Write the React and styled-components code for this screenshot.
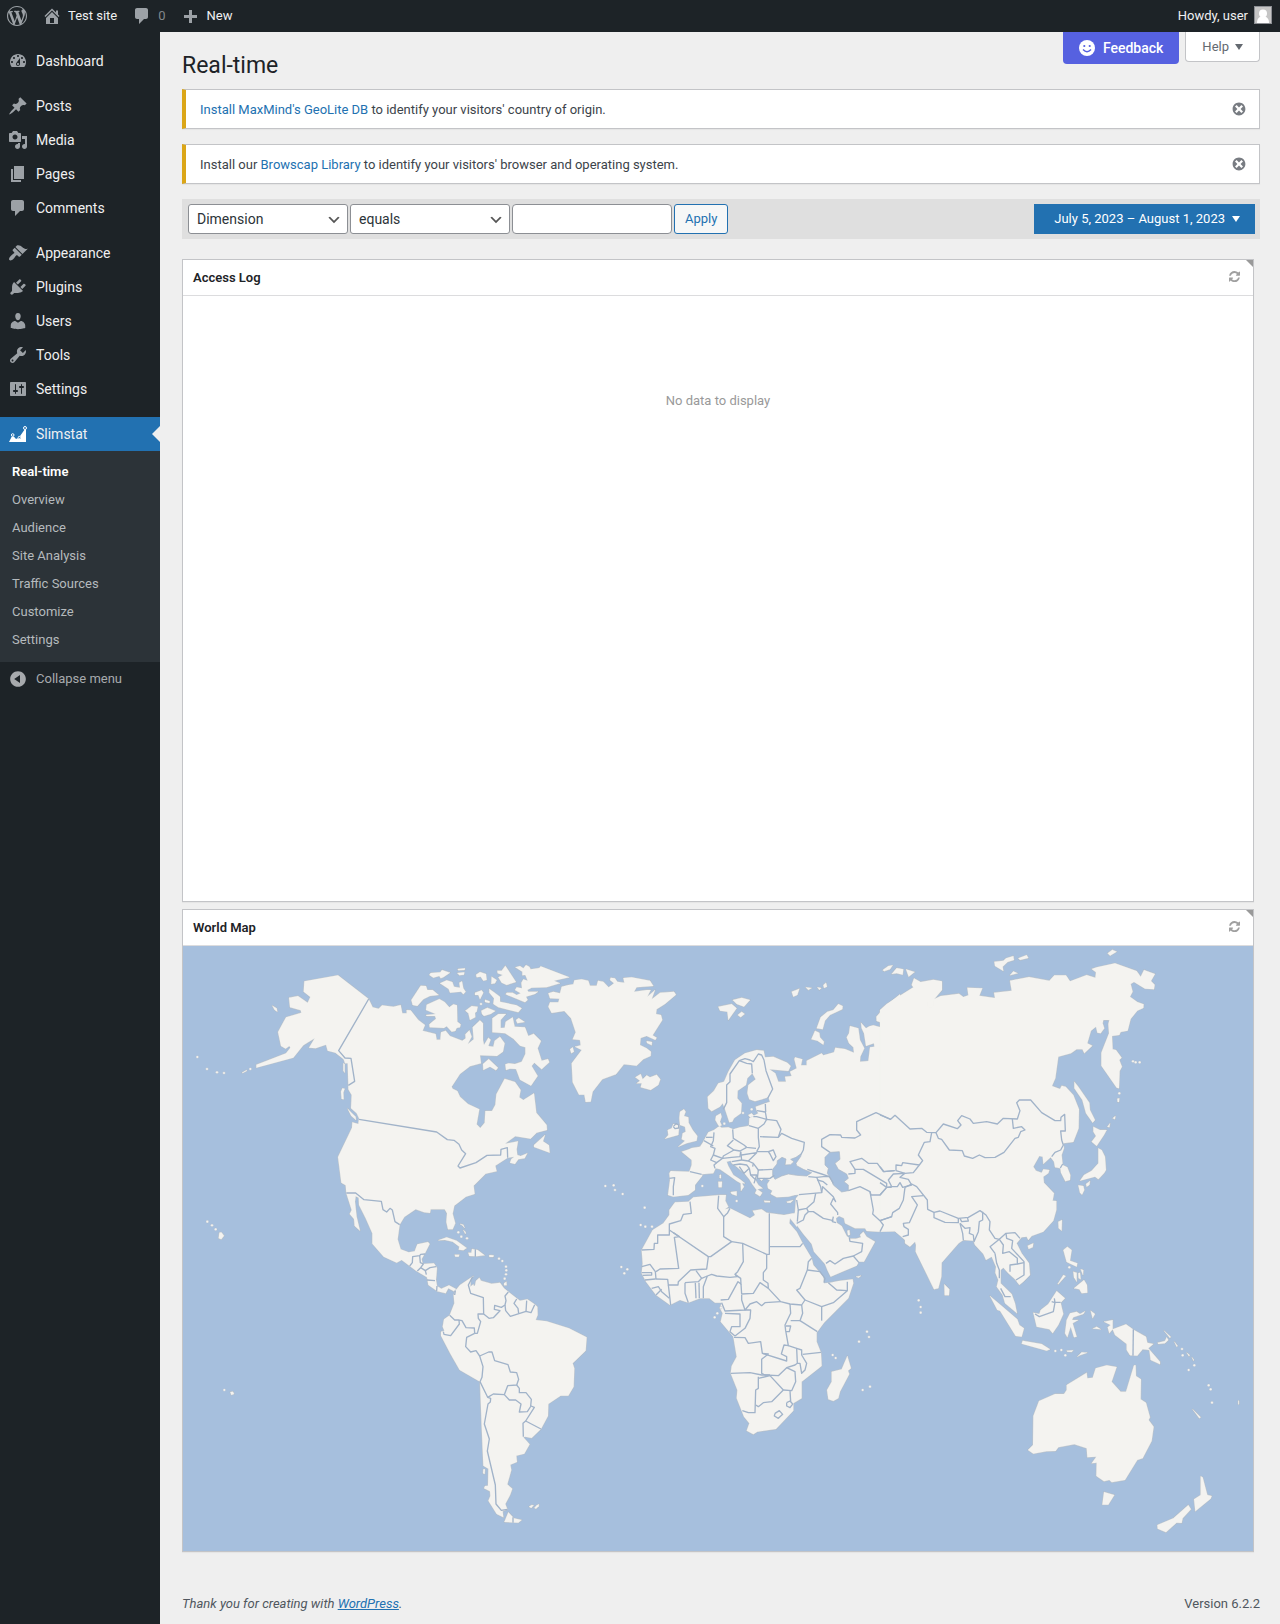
import styled, { createGlobalStyle, css } from "styled-components";

const icons = {
  wordpress:
    "M20 10c0-5.51-4.49-10-10-10C4.48 0 0 4.49 0 10c0 5.52 4.48 10 10 10 5.51 0 10-4.48 10-10zM7.78 15.37L4.37 6.22c.55-.02 1.17-.08 1.17-.08.5-.06.44-1.13-.06-1.11 0 0-1.45.11-2.37.11-.18 0-.37 0-.58-.01C4.12 2.69 6.87 1.11 10 1.11c2.33 0 4.45.87 6.05 2.34-.68-.11-1.65.39-1.65 1.58 0 .74.45 1.36.9 2.1.35.61.55 1.36.55 2.46 0 1.49-1.4 5-1.4 5l-3.03-8.37c.54-.02.82-.17.82-.17.5-.05.44-1.25-.06-1.22 0 0-1.44.12-2.38.12-.87 0-2.33-.12-2.33-.12-.5-.03-.56 1.2-.06 1.22l.92.08 1.26 3.41zM17.41 10c.24-.64.74-1.87.43-4.25.7 1.29 1.05 2.71 1.05 4.25 0 3.29-1.73 6.24-4.4 7.78.97-2.59 1.94-5.2 2.92-7.78zM6.1 18.09C3.12 16.65 1.11 13.53 1.11 10c0-1.3.23-2.48.72-3.59C3.25 10.3 4.67 14.2 6.1 18.09zm4.03-6.63l2.58 6.98c-.86.29-1.76.45-2.71.45-.79 0-1.57-.11-2.29-.33.81-2.38 1.62-4.74 2.42-7.1z",
  home: "M16 8.5l1.53 1.53-1.06 1.06L10 4.6l-6.47 6.49-1.06-1.06L10 2.5l4 4v-2h2v4zm-6-2.46l6 5.99V18H4v-5.97zM12 17v-5H8v5h4z",
  comments:
    "M5 2h9c1.1 0 2 .9 2 2v7c0 1.1-.9 2-2 2h-2l-5 5v-5H5c-1.1 0-2-.9-2-2V4c0-1.1.9-2 2-2z",
  plus: "M16 9v3h-5v5H8v-5H3V9h5V4h3v5h5z",
  dashboard:
    "M3.76 16h12.48c1.1-1.37 1.76-3.11 1.76-5 0-4.42-3.58-8-8-8s-8 3.58-8 8c0 1.89.66 3.63 1.76 5zM10 4c.55 0 1 .45 1 1s-.45 1-1 1-1-.45-1-1 .45-1 1-1zM6 6c.55 0 1 .45 1 1s-.45 1-1 1-1-.45-1-1 .45-1 1-1zm8 0c.55 0 1 .45 1 1s-.45 1-1 1-1-.45-1-1 .45-1 1-1zm-5.37 5.55L12 7v6c0 1.1-.9 2-2 2s-2-.9-2-2c0-.57.24-1.08.63-1.45zM4 10c.55 0 1 .45 1 1s-.45 1-1 1-1-.45-1-1 .45-1 1-1zm12 0c.55 0 1 .45 1 1s-.45 1-1 1-1-.45-1-1 .45-1 1-1zm-5 3c0-.55-.45-1-1-1s-1 .45-1 1 .45 1 1 1 1-.45 1-1z",
  posts:
    "M10.44 3.02l1.82-1.82 6.36 6.35-1.83 1.82c-1.05-.68-2.48-.57-3.41.36l-.75.75c-.92.93-1.04 2.35-.35 3.41l-1.83 1.82-2.41-2.41-2.8 2.79c-.42.42-3.38 2.71-3.8 2.29s1.86-3.39 2.28-3.81l2.79-2.79L4.1 9.36l1.83-1.82c1.05.69 2.48.57 3.4-.36l.75-.75c.93-.92 1.05-2.35.36-3.41z",
  media:
    "M13 11V4c0-.55-.45-1-1-1h-1.67L9 1H5L3.67 3H2c-.55 0-1 .45-1 1v7c0 .55.45 1 1 1h10c.55 0 1-.45 1-1zM7 4.5c1.38 0 2.5 1.12 2.5 2.5S8.38 9.5 7 9.5 4.5 8.38 4.5 7 5.62 4.5 7 4.5zM14 6h5v10.5c0 1.38-1.12 2.5-2.5 2.5S14 17.88 14 16.5s1.12-2.5 2.5-2.5c.17 0 .34.02.5.05V9h-3V6zm-4 8.05V13h2v3.5c0 1.38-1.12 2.5-2.5 2.5S7 17.88 7 16.5 8.12 14 9.5 14c.17 0 .34.02.5.05z",
  pages: "M6 15V2h10v13H6zm-1 1h8v2H3V5h2v11z",
  appearance:
    "M14.48 11.06L7.41 3.99l1.5-1.5c.5-.56 2.3-.47 3.51.32 1.21.8 1.43 1.28 2.91 2.1 1.18.64 2.45 1.26 4.45.85zm-.71.71L6.7 4.7 4.93 6.47c-.39.39-.39 1.02 0 1.41l1.06 1.06c.39.39.39 1.03 0 1.42-.6.6-1.43 1.11-2.21 1.69-.35.26-.7.53-1.01.84C1.43 14.23.4 16.08 1.4 17.07c.99 1 2.84-.03 4.18-1.36.31-.31.58-.66.85-1.02.57-.78 1.08-1.61 1.69-2.21.39-.39 1.02-.39 1.41 0l1.06 1.06c.39.39 1.02.39 1.41 0z",
  plugins:
    "M13.11 4.36L9.87 7.6 8 5.73l3.24-3.24c.35-.34 1.05-.2 1.56.32.52.51.66 1.21.31 1.55zm-8 1.77l.91-1.12 9.01 9.01-1.19.84c-.71.71-2.63 1.16-3.82 1.16H6.14L4.9 17.26c-.59.59-1.54.59-2.12 0-.59-.58-.59-1.53 0-2.12l1.24-1.24v-3.88c0-1.13.4-3.19 1.09-3.89zm7.26 3.97l3.24-3.24c.34-.35 1.04-.21 1.55.31.52.51.66 1.21.31 1.55l-3.24 3.25z",
  users:
    "M10 9.25c-2.27 0-2.73-3.44-2.73-3.44C7 4.02 7.82 2 9.97 2c2.16 0 2.98 2.02 2.71 3.81 0 0-.41 3.44-2.68 3.44zm0 2.57L12.72 10c2.39 0 4.52 2.33 4.52 4.53v2.49s-3.65 1.13-7.24 1.13c-3.65 0-7.24-1.13-7.24-1.13v-2.49c0-2.25 1.94-4.48 4.47-4.48z",
  tools:
    "M16.68 9.77c-1.34 1.34-3.3 1.67-4.95.99l-5.41 6.52c-.99.99-2.59.99-3.58 0s-.99-2.59 0-3.57l6.52-5.42c-.68-1.65-.35-3.61.99-4.95 1.28-1.28 3.12-1.62 4.72-1.06l-2.89 2.89 2.82 2.82 2.86-2.87c.53 1.58.18 3.39-1.08 4.65zM3.81 16.21c.4.39 1.04.39 1.43 0 .4-.4.4-1.04 0-1.43-.39-.4-1.03-.4-1.43 0-.39.39-.39 1.03 0 1.43z",
  settings:
    "M18 16V4c0-.55-.45-1-1-1H3c-.55 0-1 .45-1 1v12c0 .55.45 1 1 1h14c.55 0 1-.45 1-1zM8 11h1c.55 0 1 .45 1 1s-.45 1-1 1H8v1.5c0 .28-.22.5-.5.5s-.5-.22-.5-.5V13H6c-.55 0-1-.45-1-1s.45-1 1-1h1V5.5c0-.28.22-.5.5-.5s.5.22.5.5V11zm5-2h-1c-.55 0-1-.45-1-1s.45-1 1-1h1V5.5c0-.28.22-.5.5-.5s.5.22.5.5V7h1c.55 0 1 .45 1 1s-.45 1-1 1h-1v5.5c0 .28-.22.5-.5.5s-.5-.22-.5-.5V9z",
  collapse:
    "M10 2.16c4.33 0 7.84 3.51 7.84 7.84s-3.51 7.84-7.84 7.84S2.16 14.33 2.16 10 5.71 2.16 10 2.16zm2 11.72V6.12L6.18 9.97z",
  dismiss:
    "M10 2c4.42 0 8 3.58 8 8s-3.58 8-8 8-8-3.58-8-8 3.58-8 8-8zm5 11l-3-3 3-3-2-2-3 3-3-3-2 2 3 3-3 3 2 2 3-3 3 3z",
};

const menuGroups = [
  [{ label: "Dashboard", icon: "dashboard" }],
  [
    { label: "Posts", icon: "posts" },
    { label: "Media", icon: "media" },
    { label: "Pages", icon: "pages" },
    { label: "Comments", icon: "comments" },
  ],
  [
    { label: "Appearance", icon: "appearance" },
    { label: "Plugins", icon: "plugins" },
    { label: "Users", icon: "users" },
    { label: "Tools", icon: "tools" },
    { label: "Settings", icon: "settings" },
  ],
];

const submenu = [
  "Real-time",
  "Overview",
  "Audience",
  "Site Analysis",
  "Traffic Sources",
  "Customize",
  "Settings",
];

// Every region has its own origin and is drawn at a third of its units.
const regions = [
  {
    name: "north-america",
    x: -3,
    y: -46,
    land: [
      "373,244 474,226 566,297 578,322 596,326 606,316 640,320 662,315 667,340 680,340 680,330 692,331 715,360 735,375 728,392 767,402 770,419 781,419 783,397 797,392 810,408 847,422 857,415 856,403 868,391 875,410 863,433 881,418 878,382 900,361 909,370 909,420 912,435 925,413 932,419 925,438 940,440 944,422 960,410 974,430 969,455 951,468 900,466 903,490 870,499 840,522 815,560 818,566 832,573 840,590 864,612 898,628 890,673 901,684 914,668 916,633 936,633 946,614 949,583 974,536 1005,546 1022,570 1018,592 1030,600 1062,580 1069,638 1100,675 1101,690 1070,698 1052,716 1006,709 975,731 1014,724 1010,748 1012,765 1022,768 1042,760 1034,775 1015,778 1005,792 990,788 994,777 1003,770 982,774 946,797 950,814 917,821 881,857 884,882 858,890 823,917 818,941 826,970 818,988 804,988 799,966 801,940 794,928 752,928 750,939 732,937 707,928 673,951 659,974 653,1018 662,1048 686,1057 704,1054 712,1033 744,1026 749,1032 735,1060 725,1077 728,1092 762,1090 771,1104 768,1140 771,1158 784,1166 807,1156 828,1167 822,1174 805,1165 797,1180 772,1174 745,1155 741,1132 709,1113 689,1098 665,1080 650,1088 611,1070 577,1031 577,1000 557,955 537,915 536,893 527,889 525,905 530,950 540,992 524,978 522,957 509,942 515,930 499,880 497,856 484,848 474,771 516,683 517,667 535,672 537,655 530,640 513,625 515,585 505,568 505,556 503,490 495,490 491,478 466,458 443,452 438,434 407,445 387,443 404,415 370,436 340,473 229,503 229,494 318,460 331,443 328,438 317,446 303,438 294,396 318,352 364,338 362,331 330,322 327,293 354,288 383,308 391,291 371,275",
      "487,565 494,566 490,578 491,598 485,597 483,575",
      "490,490 494,492 494,518 490,512",
      "503,626 516,640 527,650 528,660 514,648",
      "1095,705 1089,724 1107,736 1109,758 1062,741 1062,735",
      "277,317 290,325 292,335 284,330",
      "186,518 200,510 200,513 188,519",
      "118,998 124,997 132,1007 124,1018 116,1015",
      "775,1021 800,1012 830,1022 860,1044 850,1051 836,1049 838,1040 818,1025 795,1020",
      "824,1064 838,1064 836,1070 826,1070",
      "865,1058 874,1058 876,1047 893,1050 914,1066 890,1069 868,1068",
      "928,1065 941,1066 940,1071 928,1071",
      "840,972 850,974 854,984 848,977",
      "850,990 857,996 856,1002",
      "972,1150 979,1145 980,1156 972,1156",
    ],
    borders: [
      "566,297 476,452 495,474 513,475 524,544 505,556",
      "537,658 770,696 802,719 822,721 837,733 845,750 857,761 834,798 840,804 888,788 921,766 962,765 963,748 982,743 983,773",
      "499,879 527,879 552,899 604,904 609,929 620,936 630,925 637,930 645,965 659,974",
      "689,1098 697,1088 698,1070 719,1067 722,1063 735,1062",
      "719,1067 721,1088 730,1092 722,1103 712,1113",
      "722,1103 736,1112 750,1103 768,1100",
      "736,1112 739,1124",
      "741,1140 765,1142",
      "771,1158 770,1173",
      "886,1048 886,1070",
    ],
    dots: "52,471 81,507 111,517 132,519 211,507 82,965 96,976 107,988 835,997 844,1010 861,1015 957,1076 967,1083 978,1100 979,1111 978,1123 974,1136",
  },
  {
    name: "arctic",
    x: 217,
    y: -6,
    land: [
      "80,194 118,177 134,186 148,202 160,193 171,196 172,245 182,253 180,262 170,264 166,273 155,275 140,259 132,264 89,262 88,253 108,236 105,228 80,228 78,225 107,222 78,210",
      "38,195 34,180 62,137 78,138 82,150 98,150 116,165 90,168 70,178 52,198",
      "88,105 92,99 121,97 126,90 150,98 130,112 122,115 118,108 100,113",
      "120,130 140,121 157,126 162,140 180,143 178,128 186,124 190,145 197,155 190,163 183,155 150,158 146,147",
      "173,87 195,85 194,90 175,91",
      "172,99 193,97 192,104 178,106",
      "228,104 240,96 258,102 260,120 250,122 242,110 230,112",
      "275,110 290,120 285,130 274,132",
      "292,92 305,92 316,77 348,126 320,135 305,128 295,112 308,105 293,100",
      "346,82 360,78 370,85 378,75 388,80 392,88 418,84 422,79 508,112 462,122 480,130 440,142 395,143 382,150 385,155 414,155 405,162 378,170 383,180 375,187 317,163 320,158 338,158 350,165 362,160 345,150 350,142 366,145 364,128 370,118 383,122 376,105 367,106 367,95",
      "268,147 280,155 300,170 300,185 350,196 365,205 355,217 295,202 280,192 282,175 268,158",
      "225,158 245,151 250,158 240,178 235,165 225,165",
      "255,179 269,184 268,189 255,186",
      "196,212 215,198 233,200 230,215 225,218 226,232 210,240 205,220",
      "244,212 262,203 286,213 272,222 252,228 246,222",
      "348,240 356,234 374,246 352,250",
      "277,277 277,235 295,222 318,222 302,240 302,264 314,263 317,245 338,232 344,260 375,262 385,288 401,281 423,303 413,325 425,362 444,357 448,367 425,388 403,368 395,378 413,408 393,437 360,419 348,387 330,386 318,390 316,373 326,370 345,372 365,365 376,342 376,322 360,317 340,296 315,280",
      "250,390 249,372 266,357 294,383 288,391 270,380",
      "445,160 460,155 480,160 485,140 505,135 520,133 523,121 545,118 565,122 570,137 590,137 594,122 610,125 626,142 642,130 630,120 632,113 645,115 652,125 673,128 670,114 695,112 750,122 760,138 710,142 702,155 740,150 752,150 742,170 765,150 755,178 780,158 822,155 828,164 795,192 770,208 768,222 783,225 787,240 758,286 770,293 766,300 740,288 722,294 720,315 740,325 753,335 752,348 730,358 710,377 672,373 648,403 607,418 578,455 572,485 557,486 553,464 537,464 518,427 515,370 545,330 525,320 542,316 540,300 518,298 527,277 513,235 493,213 455,219 445,200 450,187 475,187 478,176 450,175",
      "510,328 518,322 522,335 514,340",
      "740,303 756,306 755,316 741,309",
      "706,412 722,402 728,418 740,406 750,412 770,404 781,418 775,435 752,450 722,442 725,430 710,430 720,422",
    ],
    borders: [],
    dots: "243,192",
  },
  {
    name: "south-america",
    x: 237,
    y: 294,
    land: [
      "106,152 120,135 160,108 152,120 151,140 160,133 162,139 165,136 168,122 178,113 183,122 215,131 240,128 252,145 290,175 300,182 322,178 344,193 352,200 353,225 347,240 380,244 447,265 500,292 497,332 458,370 463,385 461,440 445,467 422,467 385,492 384,528 363,567 335,594 315,590 310,592 329,613 313,641 289,647 291,666 271,674 274,690 262,733 277,746 270,766 256,792 262,808 248,814 250,832 230,822 205,782 211,768 210,754 192,745 195,738 204,737 205,686 190,677 185,560 180,425 119,390 92,343 63,287 63,275 73,272 68,260 72,238 89,226 103,190 101,165",
      "265,817 282,835 305,840 295,848 253,846",
      "327,800 335,795 341,796 334,804",
      "343,804 350,796 357,793 356,799 348,806",
      "190,688 195,688 194,702 189,700",
    ],
    borders: [
      "158,110 145,135 152,160 190,173 191,222 207,235 220,233 240,212 223,208 224,196 244,202 255,195 258,182 255,168 265,156",
      "255,195 257,212 271,229 318,214 333,218 344,194",
      "290,177 282,190 294,205 296,220",
      "318,214 320,182",
      "191,222 174,222 175,235 182,245 172,280 164,280 163,264 138,263 126,242 115,240 104,240 89,226",
      "117,240 118,252 92,287 72,283 70,275",
      "164,280 140,292 137,320 152,336 168,332 179,348 206,336 216,336 224,362 264,374 271,396 290,398 296,418 290,435 263,437 253,464 268,480 287,480 303,492 298,516 322,515 333,498 343,502 317,543 309,550 310,590",
      "179,348 189,380 186,412 180,425 203,472 220,462 253,464",
      "203,472 212,475 211,486 204,492 193,552 208,597 202,633 226,735 228,792 244,811 262,808",
      "290,435 298,445 298,458 318,458 334,478 332,498",
      "317,543 363,567",
      "106,152 104,165",
      "279,832 279,848",
    ],
    dots: "",
  },
  {
    name: "europe",
    x: 357,
    y: -46,
    land: [
      "1080,283 1040,315 1009,350 1010,363 1036,372 1027,383 1000,376 988,379 978,385 963,368 965,385 972,400 978,438 1002,430 1003,440 990,442 985,483 960,485 961,470 973,445 960,420 955,385 930,378 927,400 920,412 927,430 940,442 942,458 915,447 886,443 882,457 850,466 845,460 800,482 800,496 783,496 787,478 765,472 763,478 770,505 750,515 755,528 735,530 738,545 715,545 706,520 688,508 745,513 752,498 742,488 700,470 675,472 671,452 650,450 615,460 585,480 565,515 552,545 535,550 522,572 503,590 505,625 515,634 540,620 548,610 555,628 568,667 577,665 582,655 603,640 605,610 592,595 593,572 618,555 622,535 637,520 647,538 625,555 622,580 628,598 645,604 685,592 690,605 670,612 647,620 650,632 655,640 640,648 628,655 627,677 612,680 600,682 580,688 565,682 545,683 535,676 526,660 528,648 542,640 545,650 540,665 545,676 533,682 522,690 505,697 488,728 480,740 455,744 447,748 425,755 455,780 455,795 448,815 392,813 388,820 390,840 384,885 400,890 445,885 465,870 465,855 487,827 485,823 520,820 527,805 540,808 565,825 590,843 602,850 603,873 612,860 606,850 615,850 600,838 580,825 565,798 560,785 572,782 575,790 590,800 615,822 628,838 637,853 650,870 645,880 660,889 667,878 652,868 668,865 655,855 645,838 655,833 665,842 672,833 690,840 682,852 684,865 697,872 692,882 710,892 745,890 765,885 777,884 768,895 765,935 760,955 768,972 790,1002 815,1032 822,1055 855,1092 862,1110 872,1130 950,1097 957,1085 972,1085 1005,1025 980,1010 970,995 960,1005 963,1012 948,1016 930,1016 920,1008 905,978 890,968 888,955 897,948 912,955 915,970 945,985 975,985 980,993 1015,995 1065,993 1080,1005",
      "432,628 437,635 432,648 445,652 446,668 458,690 472,708 470,722 440,730 415,740 435,722 425,718 428,700 437,695 435,680 420,675 418,655 420,635",
      "400,672 418,676 415,705 375,716 385,705 383,690 395,685",
      "535,320 575,312 590,325 565,360 562,335 540,332",
      "578,300 605,293 630,300 612,320 590,312",
      "593,345 605,335 614,342 602,352",
      "755,275 778,266 772,285 760,290",
      "797,262 815,264 805,270",
      "832,262 844,264 838,270",
      "850,255 858,248 861,260 852,264",
      "895,312 908,318 907,328 870,345 855,362 848,388 830,385 842,352 862,335 880,330",
      "825,392 838,398 840,412 852,425 850,434 832,422 814,418",
      "625,645 635,640 642,648 630,652",
      "535,845 546,845 545,862 536,862",
      "539,825 543,824 543,835 539,834",
      "572,876 590,874 590,887 575,882",
      "672,902 690,903 690,907 674,907",
      "740,905 760,900 752,908 742,908",
      "922,992 928,990 930,1004 924,1006",
      "948,1130 963,1127 956,1133",
    ],
    water: [
      "698,808 711,792 712,782 726,772 738,777 735,795 752,794 762,785 752,778 768,772 782,762 783,768 768,790 770,797 790,808 815,818 800,828 770,826 745,822 725,828 705,838 698,826",
      "898,755 900,778 885,790 895,808 920,822 925,835 912,845 925,855 925,872 905,876 880,855 875,840 862,820 865,805 855,795 855,772 870,757",
    ],
    borders: [
      "550,628 560,608 560,555 570,545 570,522 598,482 615,476 630,480 640,485 655,462 665,465 672,480 678,512 698,567 683,595",
      "598,482 620,490 635,492 637,520",
      "650,632 676,636 680,658 650,650 640,650",
      "676,612 677,636",
      "627,677 655,685 672,672 680,658 710,662 723,688 715,712 660,710",
      "655,685 655,712 658,740 650,755",
      "715,712 725,700 755,715 793,727 790,750 782,765",
      "578,688 580,715 612,735 620,742 648,745",
      "580,720 562,737 582,750 600,753 620,742",
      "522,697 520,722 512,740 525,745 520,765 548,775",
      "520,765 512,780 530,788 548,775 575,772 600,770 602,755",
      "492,722 520,738",
      "498,712 518,712",
      "450,815 485,823",
      "530,788 522,795 525,805",
      "388,835 404,833 400,860 400,886",
      "548,775 550,768 582,750",
      "602,755 605,780 625,783 650,758 605,765",
      "575,785 605,780",
      "625,783 640,790 638,800",
      "650,755 685,755 700,750 708,770 700,782 690,762 685,755",
      "580,795 600,792 620,795 628,805 612,820 598,800",
      "640,790 655,810 697,808",
      "655,810 652,835 690,835 703,826",
      "628,805 632,825 645,838",
      "632,825 650,825 642,850",
      "400,680 408,671 416,675 416,684 405,686 400,680",
      "805,830 830,832 842,860 845,878 777,884",
      "802,808 845,822 868,830",
      "830,832 850,830 868,830 880,850",
      "832,840 850,845 862,855",
      "827,880 822,905 800,925 775,930 770,900",
      "845,878 848,860 880,890 887,905 880,895 872,912 893,938 893,945",
      "800,925 805,935 820,935 850,955 880,962",
      "805,935 795,945 790,960 770,970",
      "775,930 772,965",
      "880,950 877,965 888,968",
      "925,872 960,860 990,875 1000,930 998,942 1020,962 1030,975 1020,995",
      "990,875 993,885 1020,885 1040,862 1055,862",
      "1020,962 1056,950",
      "925,822 945,820 945,808 970,808 990,820 1040,850 1040,862",
      "945,808 930,785 965,775 985,790 1012,790 1030,815 1062,812",
      "870,757 845,740 845,718 870,704 902,705 905,712 945,714 962,705 950,690 950,665 1008,638 1052,658",
      "858,1090 870,1082 885,1092 910,1075 940,1068 965,1055 968,1030 930,1024 928,1014",
      "940,1068 957,1088",
    ],
    dots: "196,858 221,856 225,870 248,882 314,923 302,975 316,980 336,980 244,1101 262,1108 253,1120 487,858 590,903 609,639 635,628 553,671",
  },
  {
    name: "africa",
    x: 437,
    y: 134,
    land: [
      "220,352 300,345 318,345 316,362 325,380 315,388 330,385 360,400 390,415 405,405 398,392 425,388 440,398 492,405 520,400 528,402 535,430 530,440 524,432 510,415 508,430 530,455 548,490 575,535 580,555 610,590 612,610 630,608 655,603 698,598 700,610 685,655 612,728 590,758 590,785 603,818 605,858 545,905 545,955 520,970 520,992 468,1047 412,1055 400,1063 380,1052 388,1030 372,1010 350,955 352,930 332,880 335,858 350,830 340,770 302,725 308,700 300,685 305,668 285,668 268,655 240,655 205,668 180,660 150,675 108,645 78,605 65,580 68,550 65,510 98,450 130,430 148,405 148,390 165,367 205,365",
      "682,828 693,865 684,872 688,882 660,935 655,955 640,963 625,958 621,930 635,905 635,875 665,868",
    ],
    borders: [
      "210,365 214,400 190,403 182,422 148,432 148,465 113,465 113,490 103,490 102,508 65,510",
      "148,450 265,530 272,530 335,485 311,470 311,410 293,385 296,347",
      "311,410 322,400 330,385",
      "160,458 178,470 163,472 176,565 120,567 108,575",
      "265,530 260,567 212,570 175,605 174,615 145,615 143,598 106,597",
      "335,485 368,490 440,523 448,523 448,400",
      "448,500 540,500 548,490",
      "368,490 370,545 353,575 345,583 352,590 330,592 290,588 275,583 262,588 245,595 228,572",
      "345,583 362,595 363,612 354,605 325,658 302,660",
      "440,523 440,565 430,578 430,600 444,610 445,625 420,608 400,640 365,642 363,612",
      "365,645 365,660 375,690 315,693 305,668",
      "445,625 482,665 510,672 545,675 555,660 530,630 540,625 562,570 565,545 575,535",
      "562,570 600,575 615,595 612,608",
      "482,665 435,668 425,677 410,665 390,672 375,690 392,690 390,715 375,745 345,768",
      "315,700 360,702 360,740 335,740 330,755 345,768",
      "342,772 375,773 385,790 422,785 427,820 500,843 500,830 484,822 492,795 505,797 497,752 495,735 512,700 510,672",
      "427,820 445,822 425,838 425,880 435,885 475,887 500,863 525,855 532,850 530,805 505,797",
      "332,880 390,878 425,885 450,885",
      "415,890 415,925 407,930 405,998 385,998 367,992",
      "415,895 450,887 490,930 470,950 455,965 430,968 415,980 407,975",
      "490,930 515,932 527,905 525,875 500,863",
      "510,932 512,965",
      "512,722 540,722 548,700 545,675",
      "540,722 592,755",
      "548,823 603,817",
      "530,805 545,810 545,825 560,850 555,870 545,880 540,850 532,850",
      "555,660 605,680 640,668 682,632 650,630 625,608",
      "605,680 605,722",
      "682,632 682,605",
      "195,608 195,640 205,668",
      "226,608 228,655",
      "237,608 238,655",
      "262,588 250,620 250,655",
      "195,608 235,605 245,595",
      "145,615 148,640 152,675",
      "106,597 75,600",
      "95,625 115,620 125,635 148,655",
      "108,645 125,628",
      "65,578 95,578 95,585 68,586",
      "65,560 90,553 106,575 108,597",
      "465,1000 478,992 488,1003 475,1015 463,1008 465,1000",
      "500,968 510,963 518,972 510,983 500,978 500,968",
      "497,738 512,738 508,755 498,755",
    ],
    dots: "741,755 747,771 717,785 638,825 647,834 728,930 750,920 303,683 292,700 284,712",
  },
  {
    name: "asia",
    x: 697,
    y: -46,
    land: [
      "0,330 20,312 100,262 95,255 102,235 122,246 160,239 186,244 186,270 158,303 158,320 145,320 145,305 182,288 237,281 250,291 265,286 262,263 307,265 298,287 345,294 342,278 395,272 390,242 447,231 508,242 523,226 558,226 570,244 620,225 646,233 648,217 635,207 650,202 705,190 770,213 782,230 792,210 825,222 813,243 824,254 822,268 795,266 762,246 752,252 758,275 750,290 772,306 791,313 790,324 772,332 752,357 743,392 722,396 718,405 696,408 698,448 708,450 725,473 718,480 726,500 719,513 717,565 710,563 664,497 664,458 687,400 685,372 688,360 670,360 668,370 673,385 662,400 652,398 648,380 633,392 622,430 637,437 613,460 607,448 590,448 573,460 535,470 526,535 516,558 540,567 545,557 557,560 580,585 597,628 596,685 580,726 550,730 552,745 545,765 548,795 562,802 571,825 570,840 556,844 543,818 541,805 525,802 522,785 512,772 490,792 488,770 478,768 460,800 468,812 485,818 490,808 508,810 505,820 490,830 492,848 522,880 518,902 529,903 529,930 520,962 490,995 455,1008 445,1020 440,1010 425,1012 410,1030 425,1060 447,1090 450,1125 430,1145 418,1155 405,1138 385,1120 370,1103 362,1110 362,1150 395,1182 405,1210 411,1240 375,1210 368,1185 350,1160 355,1140 346,1118 348,1100 335,1070 318,1080 310,1062 285,1035 280,1022 250,1020 236,1030 185,1088 184,1130 175,1165 162,1168 107,1055 108,1035 105,1025 90,1040 75,1030 75,1020 45,994 0,994",
      "8,210 25,198 38,196 30,208 12,214",
      "35,222 50,204 70,208 68,224 50,220",
      "78,208 104,216 86,230",
      "343,185 370,182 378,175 400,168 402,180 383,186 368,200 370,213 345,198",
      "415,175 440,165 445,174 420,180",
      "390,226 400,214 413,220",
      "683,160 697,149 710,155 690,167",
      "583,545 595,560 628,608 630,630 645,660 638,668 618,640 607,600 583,565",
      "712,596 718,595 717,606 713,606",
      "698,655 706,648 705,658",
      "682,680 690,670 688,682",
      "640,680 660,690 680,690 672,705 650,738 635,725 648,708 640,695",
      "655,745 665,750 675,770 678,810 672,820 655,838 645,830 600,842 612,825 635,812 655,790",
      "595,856 610,858 613,870 606,884 600,878",
      "618,852 630,843 628,855 620,860",
      "535,965 546,960 545,992 536,985",
      "443,1037 460,1030 458,1042 446,1047",
      "193,1153 208,1168 207,1186 194,1186",
    ],
    borders: [
      "0,645 32,658 45,646 90,687 125,685 140,697 168,698 190,672 232,686 243,675 233,662 245,647 270,657 280,670 320,665 352,672 370,655 412,657 420,632 410,608 418,600 452,600 485,638 525,662 542,662 543,652 554,643 556,693 542,693 545,720 550,735 542,750 525,757 515,770",
      "168,698 175,715 185,718 208,750 247,752 253,768 278,775 298,765 315,773 345,772 372,757 405,715 415,712 422,695 435,690 425,680 400,685 397,657",
      "155,698 150,725 133,727 115,765 128,782 118,795 68,788 65,797 48,795 48,812 75,820 100,818 118,795",
      "0,800 12,815 45,812",
      "75,820 40,822 25,840 35,860 52,860 60,848 68,862 95,855 85,838 60,832 75,820",
      "0,848 20,862 35,860",
      "20,862 0,885",
      "75,862 70,900 58,925 38,938 35,950 0,962",
      "75,862 95,852 110,860 142,900 143,928 162,937 180,933 235,955 265,952 300,932 318,945 330,965 328,990 345,1015 358,1018 378,1000 405,998 420,1015",
      "130,887 95,890 112,915 88,968 70,970 72,980 85,988 85,1005 68,1010",
      "162,937 162,953 195,967 235,968 235,955",
      "240,955 245,965 265,963 262,952",
      "240,970 248,1000 250,1020",
      "240,970 255,985 270,983 268,1000 280,1005 282,1025 295,995 298,965 308,960 308,935",
      "345,1060 330,1040 358,1018 370,1035 368,1060 388,1055 412,1075 412,1092 390,1095 390,1115",
      "345,1060 350,1090 358,1110 358,1135",
      "378,1000 380,1015 398,1022 395,1045 432,1085 432,1125 408,1140",
      "412,1092 432,1088",
      "362,1165 375,1190 392,1190",
      "541,804 548,792",
    ],
    dots: "718,580 759,484 767,487 779,487",
  },
  {
    name: "oceania",
    x: 697,
    y: 294,
    land: [
      "550,30 562,20 575,30 570,62 592,70 590,80 560,66",
      "580,95 590,98 590,125 582,112",
      "595,100 600,98 602,118 596,115",
      "602,88 610,90 609,105",
      "533,132 550,105 557,108 535,133",
      "582,145 600,130 612,120 621,135 622,158 605,160 598,148",
      "330,168 362,195 412,238 418,255 432,265 425,290 407,288 360,212 352,210",
      "460,218 478,222 482,210 505,192 530,153 555,175 542,188 550,222 535,255 518,280 508,268 470,260",
      "428,302 485,312 510,328 500,332 425,311",
      "560,332 580,331 575,336 562,335",
      "592,350 605,337 622,338 600,346",
      "555,280 560,240 570,220 590,215 600,222 615,214 610,222 580,232 576,240 595,240 578,250 590,290 582,292 572,260 562,292",
      "632,212 645,222 638,235",
      "638,266 650,260 662,268 645,266",
      "672,245 698,240 698,268 738,253 762,270 798,290 802,308 820,312 805,325 840,365 840,373 812,360 808,330 788,328 772,347 750,346 740,330 740,312 705,285 698,268 688,280 683,262 692,255",
      "833,308 855,303 860,292 865,300 855,310 835,312",
      "852,272 872,290 870,294",
      "883,305 893,318 890,320",
      "920,338 929,345 927,349",
      "936,352 942,360 940,362",
      "938,508 962,532 958,535",
      "1075,482 1077,482 1077,493 1075,493",
      "477,483 525,462 552,462 560,450 560,435 620,398 622,415 638,413 647,385 680,376 710,381 695,425 722,455 738,455 762,376 767,376 768,408 783,418 782,478 798,488 810,532 806,540 821,560 815,603 788,655 772,660 735,720 695,727 688,720 672,724 649,708 650,668 635,670 649,650 622,652 620,625 583,613 535,622 527,633 500,634 460,641 444,630 459,615 460,528",
      "672,756 703,765 685,794 667,794",
      "962,709 968,712 982,765 995,768 992,776 946,814 942,778 962,765",
      "925,795 933,808 908,835 905,849 890,848 858,877 833,866 832,855 880,835",
    ],
    borders: ["465,222 478,230 520,215 525,187 542,187", "515,185 525,188 523,175", "760,268 759,347"],
    dots: "568,82 526,333 544,330 556,346 906,327 908,346 943,376 926,390 986,436 992,448 996,488 116,181 122,201 122,218",
  },
  {
    name: "pacific",
    x: -13,
    y: 394,
    land: ["181,156 189,155 192,162 184,165"],
    borders: [],
    dots: "163,150",
  },
];

const dotPoints = (dots) => (dots ? dots.split(" ").map((dot) => dot.split(",")) : []);

function MapLayer({ render }) {
  return regions.map((region) => (
    <g key={region.name} transform={`translate(${region.x} ${region.y}) scale(0.33333)`}>
      {render(region)}
    </g>
  ));
}

function WorldMap() {
  // coast lines go under the fills so that neighbouring regions join up
  return (
    <MapSvg viewBox="0 0 1070 605" role="img" aria-label="World map">
      <g fill="none" stroke="#acb7c3" strokeWidth="4" strokeLinejoin="round">
        <MapLayer render={(r) => r.land.map((p) => <polygon key={p} points={p} />)} />
      </g>
      <g fill="#f4f3f0">
        <MapLayer
          render={(r) => (
            <>
              {r.land.map((p) => (
                <polygon key={p} points={p} stroke="#f4f3f0" />
              ))}
              {dotPoints(r.dots).map(([x, y]) => (
                <circle key={x + y} cx={x} cy={y} r="4" stroke="#acb7c3" />
              ))}
            </>
          )}
        />
      </g>
      <g fill="#a6bfdd" stroke="#acb7c3" strokeWidth="2">
        <MapLayer render={(r) => (r.water || []).map((p) => <polygon key={p} points={p} />)} />
      </g>
      <g fill="none" stroke="#a1b3c9" strokeWidth="4" strokeLinejoin="round">
        <MapLayer render={(r) => r.borders.map((p) => <polyline key={p} points={p} />)} />
      </g>
    </MapSvg>
  );
}

function Dashicon({ name, size = 20 }) {
  return (
    <Icon viewBox="0 0 20 20" $size={size} aria-hidden="true">
      <path fillRule="evenodd" d={icons[name]} />
    </Icon>
  );
}

function ReportBox({ title, children }) {
  return (
    <Box>
      <BoxHeader>
        <h3>{title}</h3>
        <RefreshButton type="button" aria-label={`Refresh ${title}`}>
          <svg viewBox="0 0 1536 1792" width="11" height="13">
            <path d="M1511 928q0 5-1 7-64 268-268 434.500t-478 166.500q-146 0-282.500-55t-243.500-157l-129 129q-19 19-45 19t-45-19-19-45v-448q0-26 19-45t45-19h448q26 0 45 19t19 45-19 45l-137 137q71 66 161 102t187 36q134 0 250-65t186-179q11-17 53-117 8-23 30-23h192q13 0 22.500 9.500t9.500 22.500zm25-800v448q0 26-19 45t-45 19h-448q-26 0-45-19t-19-45 19-45l138-138q-148-137-349-137-134 0-250 65t-186 179q-11 17-53 117-8 23-30 23h-199q-13 0-22.500-9.500t-9.500-22.500v-7q65-268 270-434.500t480-166.500q146 0 284 55.500t245 156.500l130-129q19-19 45-19t45 19 19 45z" />
          </svg>
        </RefreshButton>
      </BoxHeader>
      {children}
    </Box>
  );
}

function FilterSelect({ label, value }) {
  return (
    <SelectWrap>
      <select aria-label={label} defaultValue={value}>
        <option>{value}</option>
      </select>
      <svg viewBox="0 0 20 20" width="16" height="16" aria-hidden="true">
        <path d="M5 6l5 5 5-5 2 1-7 7-7-7 2-1z" />
      </svg>
    </SelectWrap>
  );
}

function Notice({ children }) {
  return (
    <NoticeBox>
      <p>{children}</p>
      <button type="button" aria-label="Dismiss this notice">
        <Dashicon name="dismiss" size={16} />
      </button>
    </NoticeBox>
  );
}

export default function App() {
  return (
    <Page>
      <GlobalStyle />
      <AdminBar>
        <BarLink href="#about" aria-label="About WordPress" $logo>
          <Dashicon name="wordpress" />
        </BarLink>
        <BarLink href="#site">
          <Dashicon name="home" />
          Test site
        </BarLink>
        <BarLink href="#comments" $muted>
          <Dashicon name="comments" />
          <span>0</span>
        </BarLink>
        <BarLink href="#new">
          <Dashicon name="plus" />
          New
        </BarLink>
        <Account href="#profile">
          Howdy, user
          <svg viewBox="0 0 18 18" width="18" height="18" aria-hidden="true">
            <rect width="18" height="18" fill="#8c8f94" />
            <rect x="1" y="1" width="16" height="16" fill="#c5c5c5" />
            <circle cx="9" cy="7.500" r="4" fill="#fff" />
            <path d="M3 17c0-4 2-6 4-6.500h4c2 .500 4 2.500 4 6.500z" fill="#fff" />
          </svg>
        </Account>
      </AdminBar>
      <Columns>
        <Sidebar>
          {menuGroups.map((group) => (
            <MenuGroup key={group[0].label}>
              {group.map((item) => (
                <li key={item.label}>
                  <MenuLink href={`#${item.icon}`}>
                    <Dashicon name={item.icon} />
                    {item.label}
                  </MenuLink>
                </li>
              ))}
            </MenuGroup>
          ))}
          <MenuLink href="#slimstat" $current>
            <Icon viewBox="0 0 20 20" $size={20} aria-hidden="true">
              <path d="M1 18l3.500-7 3.500 4 3-1.500 6-8.500h1v13z" />
              <circle cx="4.700" cy="11" r="1.800" fill="#2271b1" />
              <circle cx="11.300" cy="13.500" r="1.500" fill="#2271b1" />
              <g fill="none" stroke="#fff">
                <circle cx="4.700" cy="11" r="1.300" />
                <circle cx="11.300" cy="13.500" r="1.100" />
                <circle cx="17" cy="4" r="1.500" fill="#2271b1" />
              </g>
            </Icon>
            Slimstat
          </MenuLink>
          <Submenu>
            {submenu.map((label, i) => (
              <li key={label}>
                <SubmenuLink href={`#slim-${i}`} $current={i === 0}>
                  {label}
                </SubmenuLink>
              </li>
            ))}
          </Submenu>
          <CollapseButton type="button">
            <Dashicon name="collapse" />
            Collapse menu
          </CollapseButton>
        </Sidebar>
        <Content>
          <TitleRow>
            <h1>Real-time</h1>
            <Tabs>
              <FeedbackButton type="button">
                <svg viewBox="0 0 16 16" width="16" height="16" aria-hidden="true">
                  <circle cx="8" cy="8" r="8" fill="#fff" />
                  <circle cx="5.300" cy="6" r="1.100" fill="#5661e0" />
                  <circle cx="10.700" cy="6" r="1.100" fill="#5661e0" />
                  <path d="M4 9.500q4 4.500 8 0" fill="none" stroke="#5661e0" strokeWidth="1.400" />
                </svg>
                Feedback
              </FeedbackButton>
              <HelpButton type="button">
                Help
                <Caret />
              </HelpButton>
            </Tabs>
          </TitleRow>
          <Notice>
            <a href="#geolite">Install MaxMind's GeoLite DB</a> to identify your visitors' country of
            origin.
          </Notice>
          <Notice>
            Install our <a href="#browscap">Browscap Library</a> to identify your visitors' browser
            and operating system.
          </Notice>
          <Filters>
            <FilterSelect label="Filter by" value="Dimension" />
            <FilterSelect label="Operator" value="equals" />
            <FilterInput type="text" aria-label="Filter value" />
            <ApplyButton type="submit">Apply</ApplyButton>
            <DateButton type="button">
              July 5, 2023 – August 1, 2023
              <Caret />
            </DateButton>
          </Filters>
          <Reports>
            <ReportBox title="Access Log">
              <EmptyLog>No data to display</EmptyLog>
            </ReportBox>
            <ReportBox title="World Map">
              <WorldMap />
            </ReportBox>
          </Reports>
          <Footer>
            <em>
              Thank you for creating with <a href="#wordpress">WordPress</a>.
            </em>
            <span>Version 6.2.2</span>
          </Footer>
        </Content>
      </Columns>
    </Page>
  );
}

// Styling
const GlobalStyle = createGlobalStyle`
  * {
    box-sizing: border-box;
  }
  body {
    margin: 0;
    background: #efefef;
    color: #3c434a;
    font: 13px/18px Roboto, "Liberation Sans", sans-serif;
  }
  button, input, select {
    font: inherit;
    margin: 0;
  }
  button {
    cursor: pointer;
  }
  h1, h3, p, ul {
    margin: 0;
    padding: 0;
  }
  ul {
    list-style: none;
  }
  a {
    color: #2271b1;
    text-decoration: none;
  }
`;
const Page = styled.div`
  display: flex;
  flex-direction: column;
  min-height: 100vh;
`;
const Icon = styled.svg`
  display: block;
  flex: none;
  width: ${({ $size }) => $size}px;
  height: ${({ $size }) => $size}px;
  fill: currentColor;
`;
const AdminBar = styled.header`
  display: flex;
  height: 32px;
  background: #1d2327;
`;
const BarLink = styled.a`
  display: flex;
  align-items: center;
  gap: 6px;
  padding: 0 ${({ $logo }) => ($logo ? 7 : 8)}px;
  color: #f0f0f1;
  ${Icon} {
    color: #9ca1a6;
  }
  ${({ $muted }) =>
    $muted &&
    css`
      padding: 0 7px;
      color: #82878b;
    `}
`;
const Account = styled(BarLink)`
  margin-left: auto;
  svg {
    margin-bottom: 2px;
  }
`;
const Columns = styled.div`
  display: flex;
  flex: 1;
`;
const Sidebar = styled.nav`
  flex: none;
  width: 160px;
  padding-top: 12px;
  background: #1d2327;
`;
const MenuGroup = styled.ul`
  margin-bottom: 11px;
`;
const MenuLink = styled.a`
  position: relative;
  display: flex;
  align-items: center;
  gap: 8px;
  height: 34px;
  padding-left: 8px;
  font-size: 14px;
  color: #f0f0f1;
  ${Icon} {
    color: #9ca1a6;
  }
  ${({ $current }) =>
    $current &&
    css`
      background: #2271b1;
      ${Icon} {
        color: #fff;
      }
      &::after {
        content: "";
        position: absolute;
        right: 0;
        top: 9px;
        border: 8px solid transparent;
        border-left: 0;
        border-right-color: #efefef;
      }
    `}
`;
const Submenu = styled.ul`
  padding: 7px 0 8px;
  background: #2c3338;
`;
const SubmenuLink = styled.a`
  display: block;
  padding: 5px 12px;
  color: ${({ $current }) => ($current ? "#fff" : "#b5babd")};
  font-weight: ${({ $current }) => ($current ? 600 : 400)};
`;
const CollapseButton = styled.button`
  display: flex;
  align-items: center;
  gap: 8px;
  width: 100%;
  height: 34px;
  padding: 0 8px;
  border: 0;
  background: none;
  color: #a7aaad;
`;
const Content = styled.main`
  display: flex;
  flex-direction: column;
  flex: 1;
  min-width: 0;
  padding: 0 20px 0 22px;
`;
const TitleRow = styled.div`
  display: flex;
  justify-content: space-between;
  height: 57px;
  h1 {
    padding-top: 19px;
    font-size: 23px;
    font-weight: 400;
    line-height: 30px;
    color: #1d2327;
  }
`;
const Tabs = styled.div`
  display: flex;
  align-items: flex-start;
  gap: 6px;
`;
const Caret = styled.span`
  border: 4px solid transparent;
  border-top: 6px solid currentColor;
  border-bottom: 0;
`;
const FeedbackButton = styled.button`
  display: flex;
  align-items: center;
  gap: 8px;
  height: 32px;
  padding: 0 16px;
  border: 0;
  border-radius: 0 0 4px 4px;
  background: #5661e0;
  color: #fff;
  font-size: 14px;
  font-weight: 500;
`;
const HelpButton = styled.button`
  display: flex;
  align-items: center;
  gap: 6px;
  height: 30px;
  padding: 0 16px;
  border: 1px solid #c3c4c7;
  border-top: 0;
  border-radius: 0 0 4px 4px;
  background: #fff;
  color: #646970;
`;
const NoticeBox = styled.div`
  display: flex;
  align-items: center;
  justify-content: space-between;
  height: 40px;
  margin-bottom: 15px;
  padding: 0 12px 0 14px;
  border: 1px solid #c3c4c7;
  border-left: 4px solid #dba617;
  background: #fff;
  box-shadow: 0 1px 1px rgba(0, 0, 0, 0.04);
  p {
    padding-top: 2px;
  }
  button {
    padding: 0;
    border: 0;
    background: none;
    color: #787c82;
  }
`;
const Filters = styled.form`
  display: flex;
  gap: 2px;
  margin-bottom: 20px;
  padding: 5px 5px 5px 6px;
  background: #dfdfdf;
`;
const SelectWrap = styled.div`
  position: relative;
  width: 160px;
  select {
    width: 100%;
    height: 30px;
    padding: 0 24px 0 8px;
    border: 1px solid #8c8f94;
    border-radius: 3px;
    background: #fff;
    color: #2c3338;
    font-size: 14px;
    appearance: none;
  }
  svg {
    position: absolute;
    right: 6px;
    top: 8px;
    fill: #555;
    pointer-events: none;
  }
`;
const FilterInput = styled.input`
  width: 160px;
  height: 30px;
  padding: 0 8px;
  border: 1px solid #8c8f94;
  border-radius: 4px;
  background: #fff;
`;
const ApplyButton = styled.button`
  height: 30px;
  padding: 0 10px;
  border: 1px solid #2271b1;
  border-radius: 3px;
  background: #f6f7f7;
  color: #2271b1;
`;
const DateButton = styled.button`
  display: flex;
  align-items: center;
  gap: 7px;
  height: 30px;
  margin-left: auto;
  padding: 0 15px 0 20px;
  border: 0;
  background: #2271b1;
  color: #fff;
`;
const Reports = styled.div`
  display: flex;
  flex-direction: column;
  gap: 7px;
  padding-right: 6px;
`;
const Box = styled.section`
  border: 1px solid #c3c4c7;
  background: #fff;
  box-shadow: 0 1px 1px rgba(0, 0, 0, 0.04);
`;
const BoxHeader = styled.div`
  position: relative;
  display: flex;
  align-items: center;
  justify-content: space-between;
  height: 36px;
  padding: 0 13px 0 10px;
  border-bottom: 1px solid #dcdcde;
  h3 {
    font-size: 13px;
    font-weight: 600;
    color: #1d2327;
  }
  &::after {
    content: "";
    position: absolute;
    top: 0;
    right: 0;
    border-top: 7px solid #999;
    border-left: 7px solid transparent;
  }
`;
const RefreshButton = styled.button`
  display: flex;
  padding: 0;
  border: 0;
  background: none;
  fill: #a0a0a0;
`;
const EmptyLog = styled.p`
  min-height: 605px;
  padding-top: 96px;
  text-align: center;
  color: #999;
`;
const MapSvg = styled.svg`
  display: block;
  width: 100%;
  height: auto;
  background: #a6bfdd;
`;
const Footer = styled.footer`
  display: flex;
  justify-content: space-between;
  margin-top: auto;
  padding: 42px 0 11px;
  color: #50575e;
  a {
    text-decoration: underline;
  }
`;
